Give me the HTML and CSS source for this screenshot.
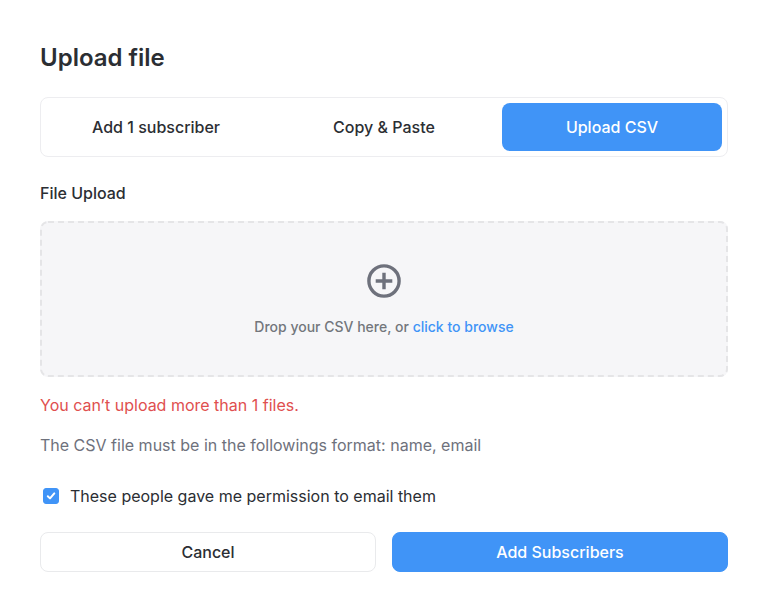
FILE: index.html
```html
<!DOCTYPE html>
<html lang="en">
<head>
<meta charset="utf-8">
<meta name="viewport" content="width=device-width, initial-scale=1">
<title>Upload file</title>
<link rel="stylesheet" href="styles.css">
</head>
<body>
<main class="dialog">
  <h1 class="title">Upload file</h1>
  <div class="tabs" role="tablist">
    <button class="tab" type="button" role="tab" aria-selected="false">Add 1 subscriber</button>
    <button class="tab" type="button" role="tab" aria-selected="false">Copy &amp; Paste</button>
    <button class="tab tab-active" type="button" role="tab" aria-selected="true">Upload CSV</button>
  </div>
  <form class="form">
    <h2 class="label">File Upload</h2>
    <div class="dropzone">
      <svg class="outline" aria-hidden="true"><rect class="outline-rect" x="1" y="1" rx="7"/></svg>
      <svg class="plus" viewBox="0 0 34 34" fill="none" stroke="currentColor" stroke-width="3.4" aria-hidden="true">
        <circle cx="17" cy="17" r="15.1"/>
        <path d="M17 8.7v16.6M8.7 17h16.6"/>
      </svg>
      <p class="hint">Drop your CSV here, or <a class="browse" href="#">click to browse</a></p>
    </div>
    <p class="message error" role="alert">You can’t upload more than 1 files.</p>
    <p class="message format">The CSV file must be in the followings format: name, email</p>
    <label class="consent">
      <span class="check">
        <input class="checkbox" type="checkbox" checked>
        <svg class="tick" viewBox="0 0 16 16" fill="none" stroke="currentColor" stroke-width="2" stroke-linecap="round" stroke-linejoin="round" aria-hidden="true"><path d="M4.8 8.3 7 10.4l4.3-5"/></svg>
      </span>
      These people gave me permission to email them
    </label>
    <div class="actions">
      <button class="button" type="button">Cancel</button>
      <button class="button primary" type="submit">Add Subscribers</button>
    </div>
  </form>
</main>
</body>
</html>
```
FILE: styles.css
```css
* { box-sizing: border-box; }
body {
  margin: 0;
  background: #fff;
  color: #2b2e33;
  font: 400 16px/24px Inter, sans-serif;
}
.dialog { padding: 42px 40px 40px; }
.title { margin: 0 0 23px; font-size: 24px; line-height: 32px; font-weight: 600; }
.tabs {
  display: grid;
  grid-template-columns: repeat(3, 1fr);
  gap: 8px;
  padding: 5px;
  border: 1px solid #ededf0;
  border-radius: 8px;
}
.tab, .button {
  font: inherit;
  font-weight: 500;
  color: inherit;
  background: #fff;
  border: 0;
  border-radius: 8px;
  padding: 0;
  cursor: pointer;
}
.tab { height: 48px; }
.tab.tab-active { background: #4094f7; color: #fff; }
.form { margin-top: 24px; }
.label { margin: 0 0 16px; font-size: 16px; line-height: 24px; font-weight: 500; }
.dropzone {
  position: relative;
  display: flex;
  flex-direction: column;
  align-items: center;
  gap: 17px;
  padding: 43px 16px 38px;
  background: #f6f6f8;
  border-radius: 8px;
}
.outline { position: absolute; inset: 0; width: 100%; height: 100%; pointer-events: none; }
.outline-rect {
  width: calc(100% - 2px);
  height: calc(100% - 2px);
  fill: none;
  stroke: #e5e5e7;
  stroke-width: 2;
  stroke-dasharray: 6 4;
}
.plus { width: 34px; height: 34px; color: #6e717c; }
.hint { margin: 0; font-size: 14px; line-height: 24px; font-weight: 500; color: #73767c; }
.browse { color: #4094f7; text-decoration: none; }
.message { margin: 16px 0 0; }
.error { color: #e04f4f; }
.format { color: #6e717c; }
.consent { display: flex; align-items: center; gap: 11px; margin: 27px 0 0 3px; }
.check { display: grid; width: 16px; height: 16px; }
.checkbox { appearance: none; grid-area: 1 / 1; width: 16px; height: 16px; margin: 0; border: 1px solid #4094f7; border-radius: 3px; }
.checkbox:checked { background: #4094f7; }
.tick { grid-area: 1 / 1; width: 16px; height: 16px; color: #fff; pointer-events: none; z-index: 1; }
.checkbox:not(:checked) + .tick { display: none; }
.actions { display: grid; grid-template-columns: 1fr 1fr; gap: 16px; margin-top: 24px; }
.button { height: 40px; border: 1px solid #e9eaec; }
.button.primary { background: #4094f7; border-color: #4094f7; color: #fff; }
```
